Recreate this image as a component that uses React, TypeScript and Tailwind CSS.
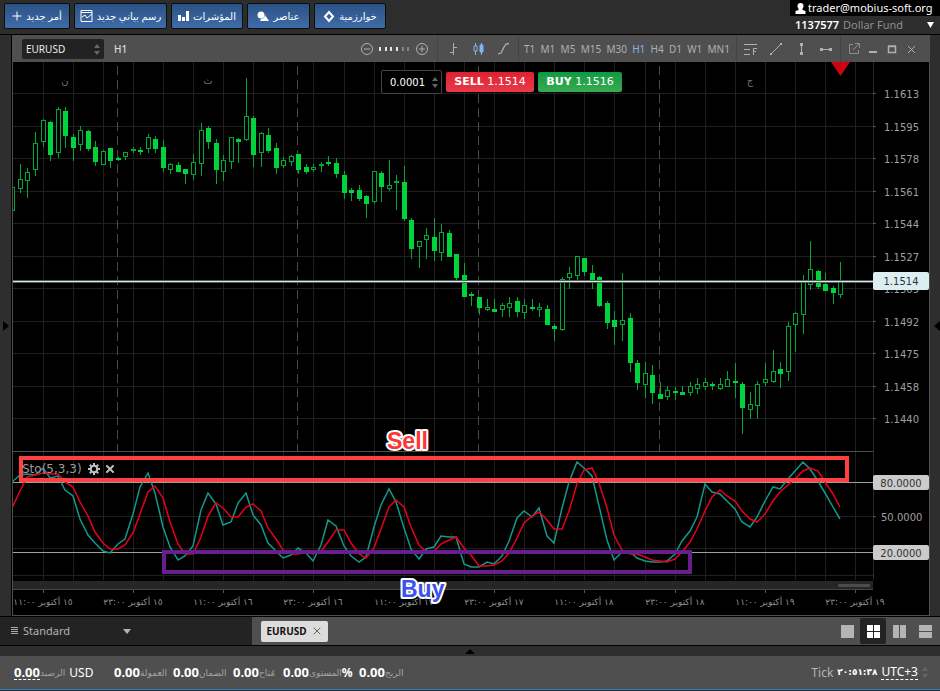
import { useState, type ReactNode } from 'react';
import { X } from 'lucide-react';

// [high, body top, body bottom, low, filled]
type Candle = [number, number, number, number, number];

const CANDLES: Candle[] = [
  [187, 187, 211, 211, 0], [164, 179, 189, 193, 0], [168, 172, 181, 198, 0], [132, 143, 170, 176, 0],
  [119, 120, 142, 147, 0], [121, 122, 155, 161, 1], [107, 109, 153, 158, 0], [107, 111, 136, 148, 1],
  [134, 137, 148, 161, 1], [126, 130, 145, 151, 0], [130, 131, 149, 151, 1], [141, 147, 162, 166, 1],
  [150, 151, 165, 165, 0], [148, 148, 161, 168, 1], [157, 158, 160, 161, 1], [152, 152, 157, 160, 0],
  [147, 149, 151, 153, 0], [147, 150, 152, 155, 1], [134, 137, 149, 153, 0], [136, 139, 149, 153, 1],
  [140, 147, 168, 172, 1], [163, 164, 170, 174, 0], [162, 165, 172, 172, 1], [169, 169, 174, 184, 1],
  [154, 162, 175, 180, 0], [123, 130, 164, 176, 0], [126, 128, 142, 149, 1], [139, 143, 170, 184, 1],
  [155, 160, 172, 181, 0], [137, 137, 162, 169, 0], [138, 139, 142, 163, 1], [78, 116, 140, 141, 0],
  [116, 118, 155, 167, 1], [132, 133, 153, 167, 0], [128, 135, 151, 153, 1], [143, 148, 168, 174, 1],
  [157, 160, 166, 168, 0], [155, 156, 162, 166, 0], [154, 154, 170, 174, 1], [164, 167, 172, 174, 1],
  [164, 167, 170, 172, 0], [162, 164, 166, 172, 0], [156, 162, 164, 166, 1], [158, 163, 174, 178, 1],
  [171, 175, 193, 199, 1], [188, 190, 193, 201, 1], [185, 190, 199, 201, 1], [195, 196, 204, 218, 1],
  [171, 171, 202, 204, 0], [171, 173, 187, 202, 1], [160, 185, 189, 191, 0], [175, 181, 183, 210, 0],
  [166, 182, 219, 221, 1], [218, 220, 249, 259, 1], [241, 241, 247, 268, 0], [228, 235, 240, 259, 0],
  [218, 237, 251, 261, 1], [224, 232, 253, 261, 0], [230, 233, 257, 257, 1], [254, 254, 278, 283, 1],
  [263, 275, 297, 297, 1], [292, 294, 296, 306, 1], [297, 297, 308, 315, 1], [299, 307, 310, 311, 0],
  [299, 309, 312, 312, 1], [303, 305, 310, 317, 0], [297, 303, 308, 317, 0], [297, 301, 312, 317, 1],
  [299, 305, 313, 319, 0], [299, 307, 309, 311, 1], [303, 307, 310, 317, 0], [305, 309, 325, 325, 1],
  [324, 326, 329, 341, 1], [277, 279, 330, 331, 0], [267, 273, 278, 289, 0], [256, 256, 276, 280, 0],
  [258, 258, 272, 276, 1], [265, 273, 280, 289, 1], [276, 277, 306, 307, 1], [301, 303, 323, 329, 1],
  [311, 320, 327, 345, 1], [273, 320, 325, 341, 0], [313, 318, 363, 372, 1], [360, 363, 383, 390, 1],
  [362, 373, 385, 398, 0], [365, 375, 393, 404, 1], [382, 394, 399, 399, 1], [386, 390, 397, 400, 0],
  [387, 391, 393, 400, 1], [386, 392, 395, 395, 1], [382, 386, 393, 396, 0], [378, 384, 389, 394, 0],
  [378, 382, 387, 390, 0], [382, 384, 386, 390, 1], [378, 384, 389, 390, 0], [371, 379, 387, 387, 0],
  [363, 381, 383, 398, 1], [382, 384, 408, 434, 1], [392, 404, 410, 419, 0], [381, 384, 406, 419, 0],
  [363, 379, 383, 386, 0], [350, 371, 382, 383, 0], [362, 369, 374, 388, 1], [322, 326, 372, 381, 0],
  [312, 313, 325, 352, 0], [275, 282, 315, 334, 0], [241, 269, 285, 290, 0], [270, 271, 287, 289, 1],
  [273, 284, 291, 291, 1], [286, 288, 293, 304, 1], [262, 281, 295, 298, 0],
];

const STO_K = [
  482, 475, 474, 475, 468, 478, 476, 490, 496, 519, 535, 543, 551, 553, 544, 539, 514, 487, 473, 493,
  527, 547, 560, 556, 546, 510, 493, 504, 525, 522, 503, 493, 515, 525, 543, 551, 558, 555, 548, 553,
  561, 545, 520, 526, 546, 556, 562, 557, 527, 505, 489, 502, 528, 549, 559, 549, 547, 536, 537, 537,
  564, 567, 567, 562, 564, 556, 541, 518, 511, 517, 508, 536, 543, 508, 482, 462, 468, 476, 506, 540,
  560, 552, 552, 558, 561, 562, 562, 561, 554, 541, 531, 517, 484, 492, 494, 501, 509, 522, 527, 517,
  501, 487, 489, 479, 471, 462, 469, 481, 493, 507, 519,
];

const STO_D = [
  508, 491, 477, 475, 473, 474, 474, 482, 487, 502, 516, 532, 543, 549, 549, 545, 533, 514, 492, 486,
  498, 522, 544, 554, 554, 537, 516, 503, 508, 517, 517, 507, 504, 511, 528, 539, 550, 554, 554, 552,
  554, 551, 542, 530, 530, 543, 554, 558, 548, 529, 507, 500, 507, 527, 545, 552, 551, 544, 540, 537,
  548, 555, 566, 566, 565, 561, 553, 538, 523, 516, 512, 520, 529, 529, 511, 484, 470, 468, 483, 508,
  535, 550, 554, 554, 557, 560, 561, 562, 559, 552, 542, 529, 511, 497, 490, 496, 501, 511, 519, 522,
  514, 501, 492, 485, 479, 471, 468, 471, 482, 494, 507,
];

const PRICES = [
  '1.1613', '1.1595', '1.1578', '1.1561', '1.1544', '1.1527', '1.1509', '1.1492', '1.1475', '1.1458', '1.1440',
];

const DATES = [
  '١٥ أكتوبر ١١:٠٠', '١٥ أكتوبر ٢٣:٠٠', '١٦ أكتوبر ١١:٠٠', '١٦ أكتوبر ٢٣:٠٠', '١٧ أكتوبر ١١:٠٠',
  '١٧ أكتوبر ٢٣:٠٠', '١٨ أكتوبر ١١:٠٠', '١٨ أكتوبر ٢٣:٠٠', '١٩ أكتوبر ١١:٠٠', '١٩ أكتوبر ٢٣:٠٠',
];

const TIMEFRAMES = ['T1', 'M1', 'M5', 'M15', 'M30', 'H1', 'H4', 'D1', 'W1', 'MN1'];

const barX = (i: number) => Math.round(12.4 + i * 7.526);
const priceY = (i: number) => Math.round(93.4 + i * 32.5);
const toPoints = (values: number[]) => values.map((y, i) => `${barX(i)},${y}`).join(' ');

function Spinner({ className = '' }: { className?: string }) {
  return (
    <span className={`flex flex-col gap-[3px] pointer-events-none ${className}`}>
      <svg width="6" height="4" viewBox="0 0 6 4"><path d="M0 4 3 0l3 4z" fill="currentColor" /></svg>
      <svg width="6" height="4" viewBox="0 0 6 4"><path d="M0 0 3 4l3-4z" fill="currentColor" /></svg>
    </span>
  );
}

function HeaderButton({ icon, label, width }: { icon: ReactNode; label: string; width: string }) {
  return (
    <button className={`${width} h-[26px] flex items-center justify-center gap-1 border border-[#0d0d0d] rounded-xs
                        bg-linear-to-b from-[#2b5285] to-[#3f6ca8] text-white text-[10px] whitespace-nowrap`}>
      {icon}
      <span dir="rtl">{label}</span>
    </button>
  );
}

function Header() {
  return (
    <header className="flex justify-between items-start h-[35px] bg-[#2d2d2d] border-b border-black">
      <div className="flex gap-1 pl-1 pt-[3px]">
        <HeaderButton width="w-[66px]" label="أمر جديد" icon={
          <svg width="10" height="10" viewBox="0 0 10 10" stroke="#fff"><path d="M5 .5v9M.5 5h9" /></svg>
        } />
        <HeaderButton width="w-[93px]" label="رسم بياني جديد" icon={
          <svg width="13" height="12" viewBox="0 0 13 12" fill="none" stroke="#fff">
            <path d="M1 .5h11v11H1zM1 2.500h11M2 7l3-2 2 3 5-4" />
          </svg>
        } />
        <HeaderButton width="w-[72px]" label="المؤشرات" icon={
          <svg width="11" height="10" viewBox="0 0 11 10" fill="#fff"><path d="M0 4h3v6H0zM4 6h3v4H4zM8 0h3v10H8z" /></svg>
        } />
        <HeaderButton width="w-[63px]" label="عناصر" icon={
          <svg width="12" height="11" viewBox="0 0 12 11" fill="#fff">
            <circle cx="4" cy="4" r="3.500" /><path d="M8 4l4 6H3l1-2 3-1z" />
          </svg>
        } />
        <HeaderButton width="w-[72px]" label="خوارزمية" icon={
          <svg width="12" height="13" viewBox="0 0 12 13" fill="none" stroke="#fff" strokeWidth="2">
            <path d="M6 2l4 4.500L6 11 2 6.500z" />
          </svg>
        } />
      </div>
      <div className="w-[150px] text-[11px] leading-4">
        <div className="h-4 pl-[5px] flex items-center gap-[2px] bg-black text-white whitespace-nowrap">
          <svg className="shrink-0" width="11" height="11" viewBox="0 0 10 11" fill="#fff">
            <circle cx="5" cy="3" r="3" /><path d="M3 5h4v2l3 1v3H0V8l3-1z" />
          </svg>
          trader@mobius-soft.org
        </div>
        <div className="h-[17px] pl-[5px] pr-[6px] flex items-center gap-1 text-[#8d8d8d]">
          <span className="text-white font-semibold">1137577</span>
          <span>Dollar Fund</span>
          <svg className="ml-auto" width="7" height="6" viewBox="0 0 7 6"><path d="M0 0h7L3.500 6z" fill="#fff" /></svg>
        </div>
      </div>
    </header>
  );
}

function IconButton({ label, children }: { label: string; children: ReactNode }) {
  return (
    <button aria-label={label} className="w-4 h-4 flex items-center justify-center">
      <svg width="16" height="16" viewBox="0 0 16 16" fill="none" stroke="currentColor">{children}</svg>
    </button>
  );
}

function ChartToolbar({ frame, onFrame }: { frame: string; onFrame: (f: string) => void }) {
  return (
    <div className="flex items-center h-[26px] bg-[#4f4f4f] text-[#b0b0b0] text-[10px]">
      <div className="relative ml-[9px]">
        <select aria-label="Symbol" defaultValue="EURUSD"
          className="appearance-none block w-[82px] h-5 pl-1 rounded-xs bg-[#222] text-[#eee] text-[10px]">
          <option>EURUSD</option>
        </select>
        <Spinner className="absolute right-1 top-[5px] text-[#666]" />
      </div>
      <span className="ml-[10px] font-medium text-[#ddd]">H1</span>

      <div className="ml-auto w-[79px] h-full pl-[1px] flex items-center gap-1">
        <IconButton label="Zoom out"><circle cx="8" cy="8" r="5.500" /><path d="M5 8h6" /></IconButton>
        <svg width="31" height="6" viewBox="0 0 31 6">
          {[0, 6, 11, 17, 23, 28].map((x, i) => (
            <rect key={x} x={x} y="1" width="2" height="4" fill={i < 4 ? '#e4e4e4' : '#858585'} />
          ))}
        </svg>
        <IconButton label="Zoom in"><circle cx="8" cy="8" r="5.500" /><path d="M5 8h6M8 5v6" /></IconButton>
      </div>
      <div className="w-[81px] h-full px-[7px] flex items-center justify-between border-l border-[#444]">
        <IconButton label="Bars"><path d="M8.500 2v12M5 11.500h3M9 6.500h3" /></IconButton>
        <IconButton label="Candles">
          <g stroke="#83b4ee"><path d="M5.500 2v3M5.500 10v4M4 5h3v5H4zM11.500 2v12" /><path d="M10 4h3v7h-3z" fill="#83b4ee" /></g>
        </IconButton>
        <IconButton label="Line"><path d="M3 13l3-1 3-6 2-3 3-.5" strokeWidth="1.300" /></IconButton>
      </div>
      <div className="w-[218px] h-full pl-[5px] pr-[6px] flex items-center justify-between border-l border-[#444]">
        {TIMEFRAMES.map(f => (
          <button key={f} onClick={() => onFrame(f)} className={f === frame ? 'text-[#83b4ee]' : ''}>{f}</button>
        ))}
      </div>
      <div className="w-[104px] h-full px-[6px] flex items-center justify-between border-l border-[#444]">
        <IconButton label="Fibonacci"><path d="M1 3.500h13M1 8.500h6M1 13.500h6M10.500 14V7.500H14M10 10.500h3" /></IconButton>
        <IconButton label="Trend line"><path d="M3 13L13 3" /><path d="M2 12h2v2H2zM12 2h2v2h-2z" fill="currentColor" stroke="none" /></IconButton>
        <IconButton label="Vertical line"><path d="M8.500 3v10" /><path d="M7 2h3v3H7zM7 11h3v3H7z" fill="currentColor" stroke="none" /></IconButton>
        <IconButton label="Horizontal line"><path d="M3 8.500h10" /><path d="M2 7h3v3H2zM11 7h3v3h-3z" fill="currentColor" stroke="none" /></IconButton>
      </div>
      <div className="w-[89px] h-full pl-[5px] pr-[10px] flex items-center justify-between border-l border-[#444]">
        <IconButton label="Detach"><path d="M7 3.500H3.500v9h9V9M7 9l6-6M9 2.500h4.500V7" stroke="#8d8d8d" /></IconButton>
        <IconButton label="Minimize"><path d="M4 11h8" strokeWidth="2" /></IconButton>
        <IconButton label="Maximize"><path d="M4.500 5.500h7v6h-7zM4 5h8" strokeWidth="1.500" /></IconButton>
        <IconButton label="Close"><path d="M5 5l7 7M12 5l-7 7" /></IconButton>
      </div>
    </div>
  );
}

function PriceTag({ y, height, fill, label }: { y: number; height: number; fill: string; label: string }) {
  return (
    <>
      <rect x="873" y={y} width="56" height={height} rx="2" fill={fill} />
      <text x="901" y={y + Math.ceil(height / 2) + 4} textAnchor="middle" fill="#333">{label}</text>
    </>
  );
}

function Chart() {
  return (
    <svg className="block w-full h-auto bg-black text-[10px] font-['DejaVu_Sans',sans-serif]" viewBox="13 62 916 553">
      <g shapeRendering="crispEdges" fill="#1f1f1f">
        {Array.from({ length: 28 }, (_, i) => (
          <rect key={i} x={barX(4 + i * 4)} y="62" width="1" height="518" />
        ))}
        {PRICES.map((p, i) => <rect key={p} x="13" y={priceY(i)} width="860" height="1" />)}
        {[516, 548, 575].map(y => <rect key={y} x="13" y={y} width="860" height="1" />)}
        <rect x="873" y="62" width="1" height="518" fill="#2a2a2a" />
        <rect x="13" y="451" width="860" height="1" fill="#505050" />
        <rect x="13" y="581" width="860" height="9" fill="#262626" />
        <rect x="13" y="589" width="860" height="1" fill="#444" />
        <rect x="13" y="482" width="860" height="1" fill="#a0a0a0" />
        <rect x="13" y="552" width="860" height="1" fill="#a0a0a0" />
      </g>
      <rect x="838" y="584" width="32" height="3" rx="1" fill="#4c4c4c" />
      {[14, 38, 62, 86].map(i => (
        <path key={i} d={`M${barX(i) - 0.5} 66V451`} stroke="#4a4a4a" strokeDasharray="9 5" />
      ))}

      <g fill="#6f6f6f" textAnchor="middle">
        <text x="65" y="84">ن</text>
        <text x="208" y="84">ث</text>
        <text x="750" y="84">ج</text>
      </g>

      <g shapeRendering="crispEdges">
        {CANDLES.map(([high, top, bottom, low, filled], i) => (
          <g key={i}>
            <rect x={barX(i)} y={high} width="1" height={low - high} fill="#00a837" />
            <rect x={barX(i) - 1.5} y={top + 0.5} width="4" height={Math.max(bottom - top - 1, 1)}
              fill={filled ? '#00d43c' : '#000'} stroke={filled ? '#00d43c' : '#00a837'} />
          </g>
        ))}
      </g>
      <rect x="13" y="280" width="860" height="3" fill="#52595b" />
      <rect x="13" y="281" width="860" height="1" fill="#d7e9eb" />

      <polyline points={toPoints(STO_K)} fill="none" stroke="#12988d" strokeWidth="1.500" />
      <polyline points={toPoints(STO_D)} fill="none" stroke="#e8001c" strokeWidth="1.500" />

      <g fill="#a29da0">
        {PRICES.map((p, i) => (
          <g key={p}>
            <rect x="873" y={priceY(i)} width="3" height="1" fill="#555" />
            <text x="884" y={priceY(i) + 5}>{p}</text>
          </g>
        ))}
        <rect x="873" y="516" width="3" height="1" fill="#555" />
        <text x="881" y="521">50.0000</text>
      </g>
      <PriceTag y={272} height={18} fill="#dceef2" label="1.1514" />
      <PriceTag y={475} height={15} fill="#cbcbcb" label="80.0000" />
      <PriceTag y={545} height={15} fill="#cbcbcb" label="20.0000" />

      <g fill="#8f8f8f" className="text-[9px]" textAnchor="middle">
        {DATES.map((d, i) => (
          <g key={d}>
            <rect x={barX(4 + i * 12)} y="590" width="1" height="3" fill="#555" />
            <text x={barX(4 + i * 12)} y="605" direction="rtl">{d}</text>
          </g>
        ))}
      </g>
      <path d="M831 62h19l-9.500 14z" fill="#cc0411" />

      <rect x="21" y="458" width="826" height="22" fill="none" stroke="#ff4040" strokeWidth="4" />
      <rect x="164" y="552" width="526" height="20" fill="none" stroke="#681f8e" strokeWidth="4" />
      <g className="text-[23px] font-bold font-['Liberation_Sans',sans-serif]" stroke="#fff" strokeWidth="4"
        strokeLinejoin="round" paintOrder="stroke">
        <text x="387" y="449" fill="#fb3737">Sell</text>
        <text x="401" y="597" fill="#3c52f0">Buy</text>
      </g>
    </svg>
  );
}

function OrderPanel() {
  return (
    <div className="absolute left-[368px] top-[8px] flex items-center gap-1 text-white text-[11px] font-['DejaVu_Sans',sans-serif]">
      <div className="relative">
        <input aria-label="Volume" defaultValue="0.0001"
          className="block w-[61px] h-6 pl-2 rounded-xs border border-[#444] bg-black text-[10px]" />
        <Spinner className="absolute right-1 top-[7px] text-[#666]" />
      </div>
      <button className="w-[88px] h-5 rounded-xs bg-linear-to-b from-[#e0202e] to-[#e8394a]"><b>SELL</b> 1.1514</button>
      <button className="w-[84px] h-5 rounded-xs bg-linear-to-b from-[#0b9a43] to-[#37ab52]"><b>BUY</b> 1.1516</button>
    </div>
  );
}

function IndicatorLabel() {
  return (
    <div className="absolute left-[9px] top-[400px] flex items-center gap-1 text-[#9a9a9a]">
      <span className="text-[12px] leading-[14px] font-['DejaVu_Sans',sans-serif]">Sto(5,3,3)</span>
      <button aria-label="Indicator settings" className="ml-[2px]">
        <svg width="12" height="12" viewBox="0 0 12 12" fill="none" stroke="#c0c0c0">
          <circle cx="6" cy="6" r="3.200" strokeWidth="2" />
          <path d="M6 0v2M6 10v2M0 6h2M10 6h2M1.800 1.800l1.400 1.400M8.800 8.800l1.400 1.400M1.800 10.200l1.400-1.400M8.800 3.200l1.400-1.400" strokeWidth="2" />
        </svg>
      </button>
      <button aria-label="Remove indicator"><X size={12} strokeWidth={4} color="#c0c0c0" /></button>
    </div>
  );
}

function TabBar() {
  return (
    <div className="flex items-center h-[30px] bg-[#4f4f4f] border-y border-black text-[11px]">
      <button className="flex items-center w-[252px] h-full pl-[11px] bg-[#232323] text-[#b4b4b4]">
        <svg width="8" height="8" viewBox="0 0 8 8" fill="#aaa"><path d="M0 0h7v1H0zM0 2h7v1H0zM0 4h7v1H0zM0 6h7v1H0z" /></svg>
        <span className="ml-1">Standard</span>
        <svg className="ml-[53px]" width="8" height="5" viewBox="0 0 8 5"><path d="M0 0h8L4 5z" fill="#b4b4b4" /></svg>
      </button>
      <button className="ml-[9px] w-[67px] h-[21px] flex items-center justify-center gap-1 rounded-xs bg-[#dcdcdc] text-[#111] text-[10px] font-bold">
        EURUSD
        <X size={12} color="#666" />
      </button>
      <div className="ml-auto pr-[2px] flex items-center text-[#b4b4b4]">
        <button aria-label="One chart" className="w-[26px] h-[26px] flex items-center justify-center">
          <svg width="13" height="13" fill="currentColor"><path d="M0 0h13v13H0z" /></svg>
        </button>
        <button aria-label="Grid" className="w-[26px] h-[26px] flex items-center justify-center rounded-xs bg-[#232323] text-white">
          <svg width="13" height="13" fill="currentColor"><path d="M0 0h6v6H0zM7 0h6v6H7zM0 7h6v6H0zM7 7h6v6H7z" /></svg>
        </button>
        <button aria-label="Columns" className="w-[26px] h-[26px] flex items-center justify-center">
          <svg width="13" height="13" fill="currentColor"><path d="M0 0h6v13H0zM7 0h6v13H7z" /></svg>
        </button>
        <button aria-label="Rows" className="w-[26px] h-[26px] flex items-center justify-center">
          <svg width="13" height="13" fill="currentColor"><path d="M0 0h13v6H0zM0 7h13v6H0z" /></svg>
        </button>
      </div>
    </div>
  );
}

function Stat({ label, width, suffix }: { label: string; width: string; suffix?: ReactNode }) {
  return (
    <div className={`${width} flex items-center whitespace-nowrap`}>
      <b className="text-[13px]">0.00</b>
      <span className="text-[9px] text-[#a5a5a5]" dir="rtl">{label}</span>
      {suffix}
    </div>
  );
}

function StatusBar() {
  return (
    <footer className="flex items-center h-[34px] pl-[14px] pr-3 bg-[#4f4f4f] border-b border-[#2a7fc4] text-[12px] text-white">
      <div className="w-[100px] flex items-center">
        <b className="text-[13px] leading-[14px] border-b border-dashed border-white">0.00</b>
        <span className="text-[9px] text-[#a5a5a5]" dir="rtl">الرصيد</span>
        <span className="ml-1">USD</span>
      </div>
      <Stat width="w-[59px]" label="العمولة" />
      <Stat width="w-[60px]" label="الضمان" />
      <Stat width="w-[50px]" label="مُتاح" />
      <Stat width="w-[76px]" label="المستوى" suffix={<b>%</b>} />
      <Stat width="w-[50px]" label="الربح" />
      <div className="ml-auto flex items-center gap-1">
        <span className="text-[#b4b4b4]">Tick</span>
        <b className="text-[9px] font-['DejaVu_Sans',sans-serif]">٢٠:٥١:٣٨</b>
        <button className="leading-[14px] border-b border-dashed border-white">UTC+3</button>
        <Spinner className="text-[#666]" />
      </div>
    </footer>
  );
}

export default function App() {
  const [frame, setFrame] = useState('H1');

  return (
    <div className="min-h-screen flex flex-col bg-[#2e2e2e] font-['Noto_Sans','DejaVu_Sans',sans-serif]">
      <Header />
      <main className="flex">
        <button aria-label="Open left panel" className="w-3 shrink-0 flex items-center justify-center border-r border-black text-black">
          <svg width="6" height="10" viewBox="0 0 6 10"><path d="M0 0v10l6-5z" fill="currentColor" /></svg>
        </button>
        <section className="flex-1 border border-t-0 border-[#4f4f4f]">
          <div className="h-[1px] bg-[#4f4f4f]" />
          <ChartToolbar frame={frame} onFrame={setFrame} />
          <div className="relative">
            <Chart />
            <OrderPanel />
            <IndicatorLabel />
          </div>
        </section>
        <button aria-label="Open right panel" className="w-[10px] shrink-0 flex items-center justify-end text-black">
          <svg width="6" height="10" viewBox="0 0 6 10"><path d="M6 0v10L0 5z" fill="currentColor" /></svg>
        </button>
      </main>
      <TabBar />
      <button aria-label="Open terminal" className="h-[10px] flex items-center justify-center">
        <svg width="10" height="5" viewBox="0 0 10 5"><path d="M0 5h10L5 0z" fill="#000" /></svg>
      </button>
      <StatusBar />
    </div>
  );
}
